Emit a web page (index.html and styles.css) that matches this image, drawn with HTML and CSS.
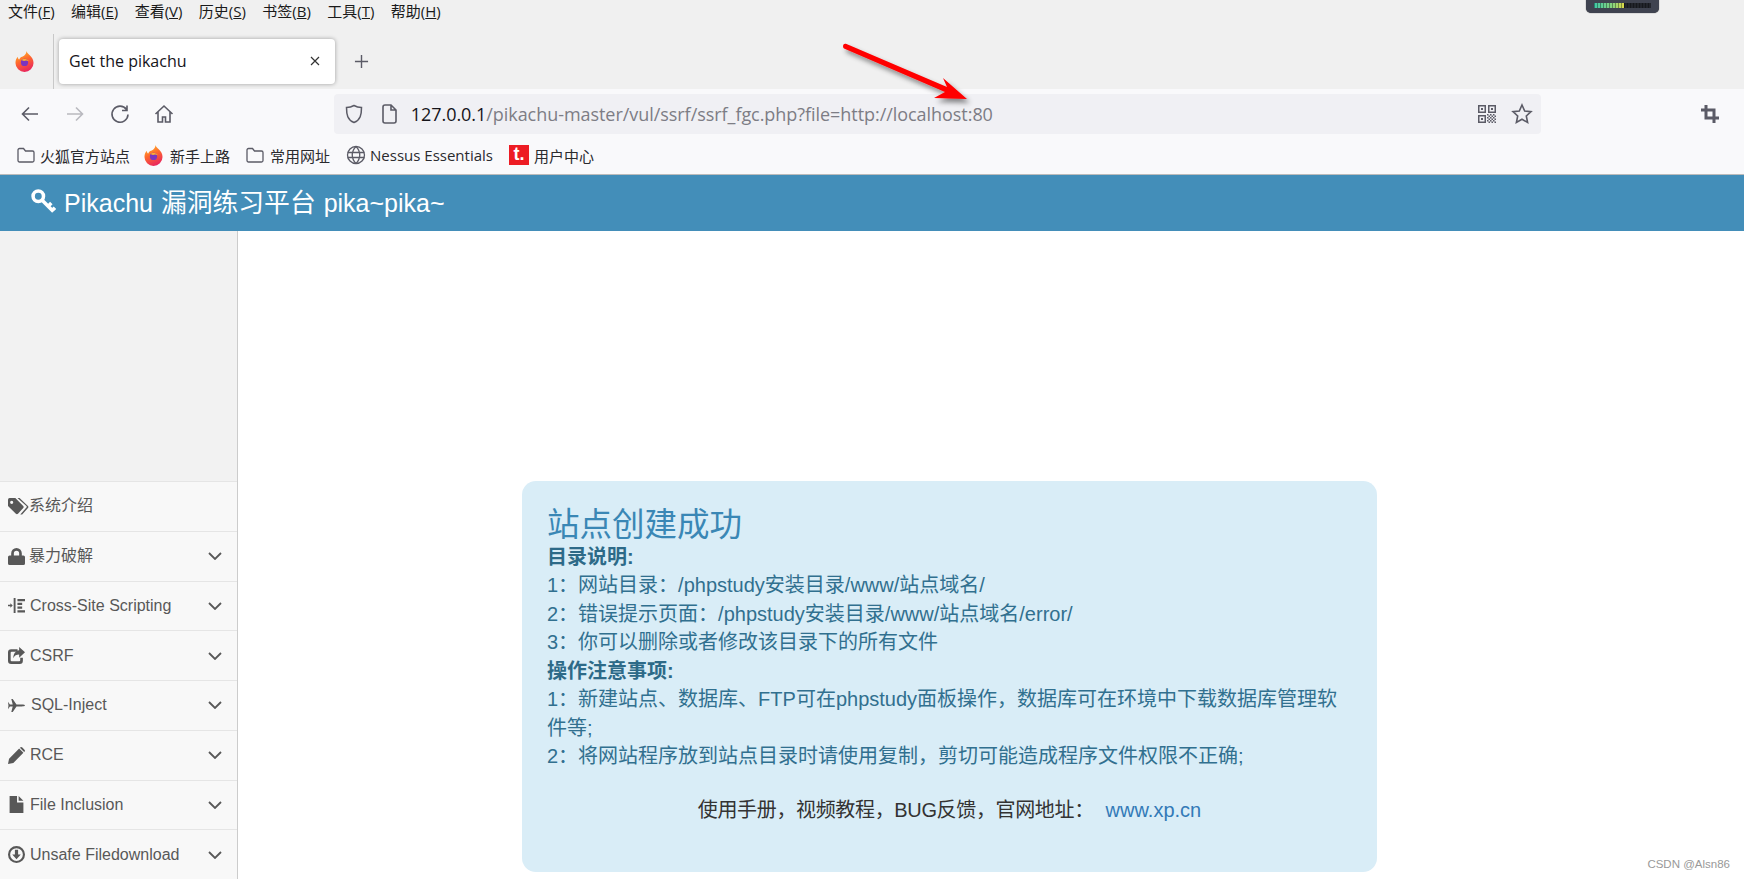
FILE: index.html
```html
<!DOCTYPE html>
<html lang="zh-CN">
<head>
<meta charset="utf-8">
<title>Get the pikachu</title>
<link rel="stylesheet" href="styles.css">
</head>
<body>
<div class="menubar">
  <span>文件(<u>F</u>)</span><span>编辑(<u>E</u>)</span><span>查看(<u>V</u>)</span><span>历史(<u>S</u>)</span><span>书签(<u>B</u>)</span><span>工具(<u>T</u>)</span><span>帮助(<u>H</u>)</span>
</div>
<div class="tabstrip">
  <div class="ff-slot">
    <svg class="ff" viewBox="0 0 20 22"><defs><linearGradient id="ffg" x1="0.2" y1="0" x2="0.6" y2="1"><stop offset="0" stop-color="#ffc02e"/><stop offset="0.45" stop-color="#ff6a2c"/><stop offset="1" stop-color="#e8245f"/></linearGradient></defs><path fill="url(#ffg)" d="M12 0c.5 2 2 3 3.500 4.500C18 7 19.500 9.500 19.500 12.500a9.500 9.500 0 1 1-19 0c0-3 1-5 2.500-6.500 0 1.500.5 2.500 1.500 3C5 6.500 8 6 9.500 5 11 4 12 2 12 0z"/><circle cx="10" cy="12" r="3.800" fill="#7b35c0"/><path fill="#ffb02e" d="M6.500 9.500c2-1.500 5.500-2 8 1-2-.8-4-.8-5 0z"/></svg>
  </div>
  <div class="tab">
    <span class="tab-title">Get the pikachu</span>
    <svg class="tab-x" viewBox="0 0 10 10"><path d="M1 1l8 8M9 1l-8 8"/></svg>
  </div>
  <svg class="newtab" viewBox="0 0 16 16"><path d="M8 1v14M1 8h14"/></svg>
</div>
<div class="toolbar">
  <div class="navbtn"><svg class="ico" viewBox="0 0 20 20"><path d="M18 10H3M9 3.500L2.500 10 9 16.500"/></svg></div>
  <div class="navbtn"><svg class="ico dim" viewBox="0 0 20 20"><path d="M2 10h15M11 3.500l6.500 6.500-6.500 6.500"/></svg></div>
  <div class="navbtn"><svg class="ico" viewBox="0 0 20 20"><path d="M16.500 5.500A8 8 0 1 0 18 10.500M17 1.500v5h-5"/></svg></div>
  <div class="navbtn"><svg class="ico" viewBox="0 0 20 20"><path d="M1.500 10L10 2l8.500 8M4 8v10h4.500v-5h3v5H16V8"/></svg></div>
  <div class="urlbar">
    <svg class="shield" viewBox="0 0 20 20"><path d="M10 1.500c2.500 1.500 5 2 7.500 2 0 7-1 12.500-7.500 15-6.500-2.500-7.500-8-7.500-15 2.500 0 5-.5 7.500-2z"/></svg>
    <svg class="pageicon" viewBox="0 0 16 20"><path d="M2 3a2 2 0 0 1 2-2h6l5 5v11a2 2 0 0 1-2 2H4a2 2 0 0 1-2-2zM10 1v5h5"/></svg>
    <span class="url"><b>127.0.0.1</b>/pikachu-master/vul/ssrf/ssrf_fgc.php?file=http://localhost:80</span>
    <svg class="qr" viewBox="0 0 18 18"><path d="M0 0h8v8H0zM1.500 1.500v5h5v-5zM10 0h8v8h-8zM11.500 1.500v5h5v-5zM0 10h8v8H0zM1.500 11.500v5h5v-5zM3 3h2v2H3zM13 3h2v2h-2zM3 13h2v2H3zM9 9h1.500v1.500H9zM12 9h1.500v1.500H12zM15 9h1.500v1.500H15zM10.500 10.500H12V12h-1.500zM13.500 10.500H15V12h-1.500zM16.500 10.500H18V12h-1.500zM9 12h1.500v1.500H9zM12 12h1.500v1.500H12zM15 12h1.500v1.500H15zM10.500 13.500H12V15h-1.500zM13.500 13.500H15V15h-1.500zM16.500 13.500H18V15h-1.500zM9 15h1.500v1.500H9zM12 15h1.500v1.500H12zM15 15h1.500v1.500H15zM10.500 16.500H12V18h-1.500zM13.500 16.500H15V18h-1.500zM16.500 16.500H18V18h-1.500z"/></svg>
    <svg class="star" viewBox="0 0 22 22"><path d="M11 2l2.700 6 6.300.7-4.700 4.300 1.300 6.500-5.600-3.300-5.600 3.300 1.300-6.500L2 8.700 8.300 8z"/></svg>
  </div>
  <svg class="crop" viewBox="0 0 18 18"><path d="M5 0v13h13M0 5h13v13"/></svg>
</div>
<div class="bookmarks">
  <svg class="bm-icon folder-1" viewBox="0 0 18 18"><path d="M1 4a1.500 1.500 0 0 1 1.500-1.500h4L8.500 5h7A1.500 1.500 0 0 1 17 6.500v8a1.500 1.500 0 0 1-1.500 1.500h-13A1.500 1.500 0 0 1 1 14.500z"/></svg>
  <span class="bm-text">火狐官方站点</span>
  <svg class="ff bm-ff" viewBox="0 0 20 22"><path fill="url(#ffg)" d="M12 0c.5 2 2 3 3.500 4.500C18 7 19.500 9.500 19.500 12.500a9.500 9.500 0 1 1-19 0c0-3 1-5 2.500-6.500 0 1.500.5 2.500 1.500 3C5 6.500 8 6 9.500 5 11 4 12 2 12 0z"/><circle cx="10" cy="12" r="3.800" fill="#7b35c0"/><path fill="#ffb02e" d="M6.500 9.500c2-1.500 5.500-2 8 1-2-.8-4-.8-5 0z"/></svg>
  <span class="bm-text">新手上路</span>
  <svg class="bm-icon folder-2" viewBox="0 0 18 18"><path d="M1 4a1.500 1.500 0 0 1 1.500-1.500h4L8.500 5h7A1.500 1.500 0 0 1 17 6.500v8a1.500 1.500 0 0 1-1.500 1.500h-13A1.500 1.500 0 0 1 1 14.500z"/></svg>
  <span class="bm-text">常用网址</span>
  <svg class="bm-icon globe" viewBox="0 0 20 20"><circle cx="10" cy="10" r="8.500"/><path d="M1.500 7.500h17M1.500 12.500h17M10 1.500c-5 5-5 12 0 17M10 1.500c5 5 5 12 0 17"/></svg>
  <span class="bm-text nessus">Nessus Essentials</span>
  <div class="redbox"><span>t.</span></div>
  <span class="bm-text">用户中心</span>
</div>
<header class="brand">
  <svg class="key" viewBox="0 0 24 24"><circle cx="7" cy="7" r="5"/><path d="M10.500 10.500L21.500 21.500M16.500 16.500l3-3M20.500 20.500l2.500-2.500"/></svg>
  <span class="brand-text">Pikachu <span class="brand-cjk">漏洞练习平台</span> pika~pika~</span>
</header>
<div class="main">
  <nav class="sidebar">
    <div class="side-top"></div>
    <div class="item"><svg class="sico tags" viewBox="0 0 20 16"><path fill-rule="evenodd" d="M0 1.500A1.500 1.500 0 0 1 1.500 0H7l7.500 7.500a1.500 1.500 0 0 1 0 2l-5 5.500a1.500 1.500 0 0 1-2 0L0 7.500zM3.500 2.500a1.500 1.500 0 1 0 0 3 1.500 1.500 0 0 0 0-3z"/><path d="M9 0h2l8 7.500a1.500 1.500 0 0 1 0 2l-5.500 6h-1.800l5.800-6.500a1 1 0 0 0 0-1.500z"/></svg><span class="itx cjk">系统介绍</span></div>
    <div class="item"><svg class="sico" viewBox="0 0 16 16"><path fill-rule="evenodd" d="M3 7V5a5 5 0 0 1 10 0v2h1.500A1.500 1.500 0 0 1 16 8.500v6a1.500 1.500 0 0 1-1.500 1.500h-13A1.500 1.500 0 0 1 0 14.500v-6A1.500 1.500 0 0 1 1.500 7zM5.500 7h5V5a2.500 2.500 0 0 0-5 0z"/></svg><span class="itx cjk">暴力破解</span><svg class="chev" viewBox="0 0 14 8"><path d="M1 1l6 6 6-6"/></svg></div>
    <div class="item"><svg class="sico" viewBox="0 0 18 16"><path d="M6 0h2v16H6zM10 1h8v2.500h-8zM10 5h5v2.500h-5zM10 9h5v2.500h-5zM10 13h8v2.500h-8zM0 7.200h2.500V5.500L5 8l-2.500 2.500V8.800H0z"/></svg><span class="itx">Cross-Site Scripting</span><svg class="chev" viewBox="0 0 14 8"><path d="M1 1l6 6 6-6"/></svg></div>
    <div class="item"><svg class="sico" viewBox="0 0 16 16"><path d="M3 2h6v2.500H3.500a1 1 0 0 0-1 1v7a1 1 0 0 0 1 1h7a1 1 0 0 0 1-1V10H14v3a3 3 0 0 1-3 3H3a3 3 0 0 1-3-3V5a3 3 0 0 1 3-3z"/><path d="M10.500 0L16 5l-5.500 5V7C8 7 6 8 5 10.500 5 6.500 7 3.500 10.500 3z"/></svg><span class="itx">CSRF</span><svg class="chev" viewBox="0 0 14 8"><path d="M1 1l6 6 6-6"/></svg></div>
    <div class="item sql"><svg class="sico" viewBox="0 0 18 14"><path d="M0 3l2 3h3L3.500 0H5l4 6h5.500c2 0 3.500.5 3.500 1s-1.500 1-3.500 1H9l-4 6H3.500L5 8H2l-2 3 .5-4z"/></svg><span class="itx">SQL-Inject</span><svg class="chev" viewBox="0 0 14 8"><path d="M1 1l6 6 6-6"/></svg></div>
    <div class="item"><svg class="sico" viewBox="0 0 16 16"><path d="M0 16l1-5L10.500 1.500l4 4L5 15zM11.500.5a1.500 1.500 0 0 1 2 0l2 2a1.500 1.500 0 0 1 0 2l-.3.300-4-4z"/></svg><span class="itx">RCE</span><svg class="chev" viewBox="0 0 14 8"><path d="M1 1l6 6 6-6"/></svg></div>
    <div class="item"><svg class="sico" viewBox="0 0 13 16"><path d="M0 0h7v6h6v10H0zM8.500 0L13 4.500H8.500z"/></svg><span class="itx">File Inclusion</span><svg class="chev" viewBox="0 0 14 8"><path d="M1 1l6 6 6-6"/></svg></div>
    <div class="item"><svg class="sico" viewBox="0 0 16 16"><path fill-rule="evenodd" d="M8 0a8 8 0 1 1 0 16A8 8 0 0 1 8 0zm0 2a6 6 0 1 0 0 12A6 6 0 0 0 8 2zM6.500 3.500h3V8H12l-4 4.500L4 8h2.500z"/></svg><span class="itx">Unsafe Filedownload</span><svg class="chev" viewBox="0 0 14 8"><path d="M1 1l6 6 6-6"/></svg></div>
  </nav>
  <section class="content">
    <div class="card">
      <h1>站点创建成功</h1>
      <p class="hd">目录说明:</p>
      <p>1：网站目录：/phpstudy安装目录/www/站点域名/</p>
      <p>2：错误提示页面：/phpstudy安装目录/www/站点域名/error/</p>
      <p>3：你可以删除或者修改该目录下的所有文件</p>
      <p class="hd">操作注意事项:</p>
      <p>1：新建站点、数据库、FTP可在phpstudy面板操作，数据库可在环境中下载数据库管理软件等;</p>
      <p>2：将网站程序放到站点目录时请使用复制，剪切可能造成程序文件权限不正确;</p>
      <p class="foot">使用手册，视频教程，BUG反馈，官网地址： <a>www.xp.cn</a></p>
    </div>
  </section>
</div>
<div class="widget"><i class="meter"></i></div>
<svg class="arrow" viewBox="0 0 140 70"><defs><filter id="ash" x="-20%" y="-20%" width="140%" height="150%"><feDropShadow dx="3" dy="4" stdDeviation="2.500" flood-color="#000" flood-opacity="0.45"/></filter></defs><path filter="url(#ash)" fill="#f00" d="M2.500 1.500c.8-1 2-1 3-.5L106 44l-4-9 24 21-33-1 11-6L3 5.500C1.800 4.800 1.800 2.500 2.500 1.500z"/></svg>
<div class="watermark">CSDN @Alsn86</div>
</body>
</html>
```
FILE: styles.css
```css
* { box-sizing: border-box; }
html, body { margin: 0; padding: 0; height: 879px; overflow: hidden; }
body { background: #fff; font-family: "Liberation Sans", "Noto Sans CJK SC", sans-serif; position: relative; }

.menubar { height: 22px; background: #f0f0f0; display: flex; gap: 16.400px; padding-left: 8px; font: 15px/22px "Open Sans", "Noto Sans CJK SC", sans-serif; color: #1a1a1a; align-items: center; }
.menubar span { white-space: nowrap; }
.menubar u { text-underline-offset: 1px; }

.tabstrip { height: 67px; background: #f0f0f0; display: flex; align-items: flex-start; }
.ff-slot { width: 54px; height: 55px; margin-top: 12px; border-right: 1px solid #c8c8c8; display: flex; align-items: center; justify-content: center; padding-right: 4px; }
.ff { width: 19px; height: 21px; display: block; }
.tab { width: 276px; height: 45px; margin: 17px 0 0 5px; background: #fff; border-radius: 4px; box-shadow: 0 0 4px rgba(0,0,0,.35); display: flex; align-items: center; justify-content: space-between; padding: 0 15px 2px 10px; }
.tab-title { font: 16px "Open Sans", sans-serif; color: #15141a; }
.tab-x { width: 10px; height: 10px; fill: none; stroke: #333; stroke-width: 1.2; }
.newtab { width: 15px; height: 15px; margin: 32px 0 0 19px; fill: none; stroke: #5b5b66; stroke-width: 1.5; }

.toolbar { height: 45px; background: #f9f9fb; display: flex; align-items: flex-start; padding: 5px 0 0 8px; }
.navbtn { width: 44.700px; height: 40px; display: flex; align-items: center; justify-content: center; }
.ico { width: 20px; height: 20px; fill: none; stroke: #5b5b66; stroke-width: 1.6; }
.ico.dim { stroke: #b9b9bf; }
.urlbar { margin-left: 147px; width: 1207px; height: 40px; background: #f0f0f4; border-radius: 4px; display: flex; align-items: center; padding-left: 10px; }
.shield { width: 20px; height: 20px; fill: none; stroke: #5b5b66; stroke-width: 1.5; }
.pageicon { width: 16px; height: 20px; margin-left: 17px; fill: none; stroke: #5b5b66; stroke-width: 1.6; }
.url { margin-left: 14px; font: 18px "Open Sans", sans-serif; color: #7d7d85; white-space: nowrap; letter-spacing: -0.050px; flex: 1; }
.url b { font-weight: 400; color: #15141a; }
.qr { width: 18px; height: 18px; fill: #5b5b66; margin-right: 15px; }
.star { width: 22px; height: 22px; fill: none; stroke: #5b5b66; stroke-width: 1.6; margin-right: 8px; }
.crop { width: 18px; height: 18px; fill: none; stroke: #5b5b66; stroke-width: 3; margin: 11px 0 0 160px; }

.bookmarks { height: 41px; padding-top: 2px; background: #f9f9fb; border-bottom: 1px solid #bbb; display: flex; align-items: center; font: 15px "Open Sans", "Noto Sans CJK SC", sans-serif; color: #2a2a2e; }
.bm-icon { width: 18px; height: 18px; fill: none; stroke: #5b5b66; stroke-width: 1.3; flex: none; }
.bm-text { white-space: nowrap; }
.nessus { margin-left: -2px; }
.folder-1 { margin-left: 17px; margin-right: 5px; }
.bm-ff { margin: 0 7px 0 14px; }
.folder-2 { margin-left: 16px; margin-right: 6px; }
.globe { margin-left: 16px; margin-right: 6px; width: 20px; height: 20px; }
.redbox { width: 20px; height: 20px; margin: 0 5px 0 16px; background: #ed1c24; color: #fff; font: 700 18px/18px "Liberation Sans", sans-serif; display: flex; justify-content: center; }

.brand { height: 56px; background: #438eb9; color: #fff; display: flex; align-items: center; padding-left: 31px; font-size: 25px; }
.brand-text { margin-bottom: 6px; margin-left: -1px; }
.brand-cjk { font-size: 25.800px; margin: 0 1px; }
.key { width: 25px; height: 25px; fill: none; stroke: #fff; stroke-width: 3.400; margin: 0 9px 3px 0; }

.main { display: flex; height: 648px; }
.sidebar { width: 238px; flex: none; background: #f8f8f8; border-right: 1px solid #ccc; overflow: hidden; }
.side-top { height: 250px; background: #f2f2f2; }
.item { height: 49.750px; border-top: 1px solid #e5e5e5; display: flex; align-items: center; padding: 0 15px 0 8px; color: #585858; font-size: 16px; }
.sico { width: 17px; height: 17px; fill: #585858; flex: none; margin-right: 5px; }
.sico.tags { width: 21px; margin-right: 1px; }
.sql .itx { margin-left: 1px; }
.itx { flex: 1; white-space: nowrap; }
.itx.cjk { padding-bottom: 4px; margin-left: -1px; }
.chev { width: 14px; height: 8px; fill: none; stroke: #585858; stroke-width: 1.8; flex: none; }

.content { flex: 1; padding: 250px 0 0 284px; }
.card { width: 855px; height: 391px; background: #d9edf7; border-radius: 14px; padding: 27px 27px 0 25px; color: #31708f; font-size: 20px; line-height: 28.570px; }
.card h1 { margin: 0; font-size: 32.500px; line-height: 34.500px; font-weight: 400; color: #3a87b5; }
.card p { margin: 0; }
.card .hd { font-weight: 700; color: #2d6a88; }
.card .foot { margin-top: 25px; padding-left: 2px; text-align: center; color: #333; letter-spacing: -0.350px; }
.foot a { color: #337ab7; margin-left: 6.600px; letter-spacing: 0; }

.widget { position: absolute; left: 1586px; top: 0; width: 73px; height: 13px; background: #3f4350; border-radius: 0 0 5px 5px; box-shadow: 0 0 1px #222; padding: 3px 8px 0; }
.meter { display: block; height: 5px; background: repeating-linear-gradient(90deg, rgba(0,0,0,.35) 0 1px, transparent 1px 3px), linear-gradient(90deg, #3fc8a8 0, #8fd47a 35%, #d9d84a 52%, #22252c 52.500%); }
.arrow { position: absolute; left: 841px; top: 43px; width: 140px; height: 70px; overflow: visible; }
.watermark { position: absolute; right: 14px; bottom: 9px; font-size: 11.500px; color: #999; }
```
